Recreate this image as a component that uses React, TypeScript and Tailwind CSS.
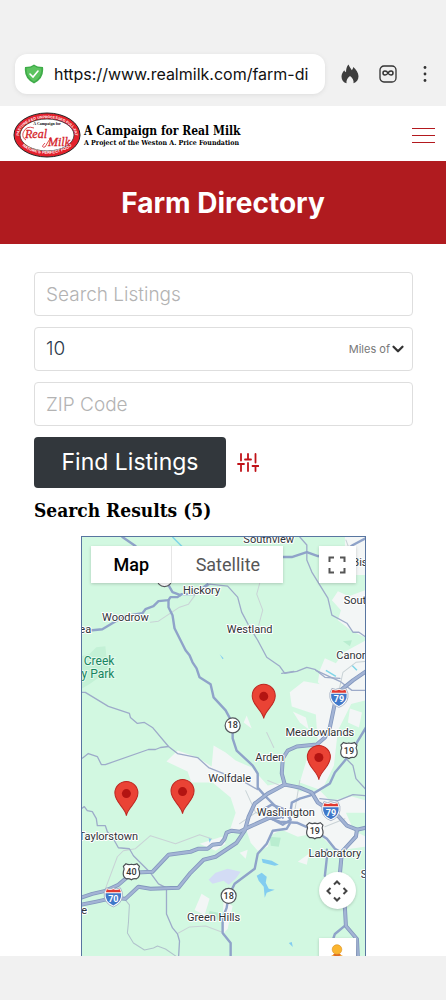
import { useState } from "react";
import type { ReactNode } from "react";
import { ChevronDown } from "lucide-react";

const MAJOR = "#8fa3c9";
const MINOR = "#9dabc9";

const woods = [
  "M81 656 L90 654 L97 647 L106 646 L107 656 L112 662 L104 674 L90 684 L81 689Z",
];

const cleared = [
  "M345 537 H366 V575 L352 575 L345 560Z",
  "M338 591 L349 596 L365 590 V637 L352 631 L338 620 L341 610 L332 600Z",
  "M344 652 L366 640 V700 L349 704 L330 694 L318 682 L320 670 L325 658 L336 663Z",
  "M290 692 L304 681 L332 686 L342 672 L366 673 V690 L352 702 L338 730 L334 765 L322 790 L300 782 L303 772 L309 752 L318 744 L316 714 L292 706Z",
  "M293 711 L306 717 L309 729 L300 722Z",
  "M167 761 L178 750 L198 757 L212 766 L214 745 L226 752 L236 760 L252 767 L268 785 L285 782 L300 791 L320 790 L330 800 L352 796 L366 800 V812 L346 812 L354 830 L366 836 V846 L336 850 L318 832 L298 836 L282 829 L272 834 L268 846 L258 850 L251 842 L247 830 L229 833 L236 812 L231 797 L213 782 L192 782 L188 771Z",
  "M350 708 L362 712 L359 727 L348 722Z",
  "M200 843 L222 836 L226 843 L216 850Z",
  "M240 852 L248 849 L246 858Z",
  "M298 861 L309 853 L307 864Z",
  "M202 893 L210 898 L205 914 L195 909Z",
  "M224 900 L233 905 L228 928 L222 934Z",
  "M247 715 L252 728 L244 722Z",
];

const lanes = [
  "M151 622 L159 621 L180 607 L189 604 L199 590",
  "M260 583 L257 594 L263 610 L259 625",
  "M106 888 L118 856 L124 850 L136 848 L151 835 L176 843 L200 834 L212 838",
  "M179 932 L190 926 L206 925 L222 931",
  "M337 700 L343 672 L356 662 L366 661",
  "M267 732 L274 747 M300 780 L295 810 M268 780 L283 786",
  "M346 540 L352 556 L366 562",
  "M325 826 L345 818 M246 790 L256 812 L240 823",
];

const minorRoads = [
  "M82 692 L86 692 L109 706 L130 713 L131 717 L138 723 L145 722 L153 727 L169 746 L178 753 L198 757 L209 767 L224 773 L244 781 L258 789",
  "M82 758 L84 757 L89 753 L98 756 L102 764 L106 764 L149 749 L156 749 L161 747 L169 746",
  "M82 808 L85 806 L88 810 L93 811 L97 818 L98 825 L106 825 L108 831 L114 838 L119 847 L130 848 L134 855 L151 872 L159 883 L167 887 L167 913 L173 927 L178 933 L180 940 L179 957",
  "M300 537 L307 545 L307 560 L312 572 L320 585 L328 598 L332 615 L347 623 L353 632 L359 632 L366 637",
  "M202 590 L210 584 L228 586 L238 597 L242 612 L250 627 L258 640 L267 657 L280 666 L285 673 L297 671 L307 667 L315 669 L325 677 L340 678",
  "M282 673 L294 671 M316 670 L340 681 L352 690 L366 690",
  "M346 758 L353 765 L356 778 L366 789",
  "M320 798 L338 800 L353 794 L366 795",
];

const tracks = [
  "M126 899 L130 904 L129 922 L128 932 L134 942 L145 949 L154 947 L158 945 L166 948 L179 957",
];

const roads = [
  "M123 537 L136 546 L162 572 L169 585 L173 592 L181 595",
  "M81 628 L93 630 L103 629 L113 623 L125 616 L143 613 L146 609 L154 606 L159 601 L169 600 L171 597 L178 597 L182 594 L195 594 L208 584",
  "M169 600 L169 607 L173 615 L175 628 L186 650 L190 655 L193 662 L197 668 L200 677 L211 684 L214 697 L226 710 L233 723 L233 738 L237 750 L253 765 L258 773 L258 787 L265 795 L277 807 L283 817",
  "M281 557 L292 557 L307 552 L318 556 L335 558 L353 545 L366 538",
  "M366 727 L357 742 L345 760 L335 772 L330 783 L310 795 L300 798 L292 802 L290 817",
  "M290 823 L287 828 L273 830 L267 843 L258 853 L255 868 L235 883 L229 895 L227 907 L223 917 L223 932 L231 942 L231 957",
  "M268 817 L280 821 L297 822 L315 830 L327 838 L335 848 L342 852 L357 833",
  "M327 849 L327 857 L325 875 M346 924 L335 933 L332 942",
  "M258 812 L272 804 L283 808 L291 819 L283 824 L270 817",
];

const highways = [
  "M81 897 L93 893 L106 890 L119 884 L133 872 L153 871 L169 854 L191 851 L199 848 L208 848 L213 844 L221 843 L225 838 L227 832 L232 830 L240 831 L248 827 L270 817 L280 816",
  "M81 904 L96 901 L114 897 L126 898 L139 886 L151 888 L179 887 L191 872 L204 859 L216 856 L237 842 L245 830 L249 816 L255 803 L268 793 L285 784 L300 787 L312 792 L318 802 L338 815 L347 825 L357 829 L366 827",
  "M285 784 L282 773 L283 758 L288 750 L297 746 L317 744 L325 737 L330 727 L335 703 L337 693 L353 680 L366 671",
  "M357 829 L356 836 L342 851 L340 873 L345 907 L346 925 L357 938 L358 957",
];

const places = [
  { name: "Southview", x: 269, y: 543 },
  { name: "Hickory", x: 202, y: 594 },
  { name: "Woodrow", x: 126, y: 621 },
  { name: "Westland", x: 250, y: 633 },
  { name: "Bis", x: 360, y: 566 },
  { name: "Sout", x: 355, y: 604 },
  { name: "Canor", x: 351, y: 659 },
  { name: "Meadowlands", x: 320, y: 736 },
  { name: "Arden", x: 270, y: 760 },
  { name: "Wolfdale", x: 230, y: 781 },
  { name: "Washington", x: 286, y: 815 },
  { name: "Taylorstown", x: 109, y: 839 },
  { name: "Laboratory", x: 335, y: 856 },
  { name: "Green Hills", x: 214, y: 920 },
  { name: "ea", x: 86, y: 633 },
  { name: "e", x: 85, y: 913 },
  { name: "S", x: 364, y: 877 },
];

const pins = [
  { x: 264, y: 718 },
  { x: 319, y: 779 },
  { x: 127, y: 815 },
  { x: 183, y: 813 },
];

function Interstate({ x, y, label }: { x: number; y: number; label: string }) {
  return (
    <g transform={`translate(${x} ${y})`}>
      <path d="M-7 -9 Q-3 -7 0 -9 Q3 -7 7 -9 Q10 -4 9 0 Q8 7 0 10 Q-8 7 -9 0 Q-10 -4 -7 -9Z" fill="#fff" stroke="#9aa7bd" strokeWidth="0.8" />
      <path d="M-6.500 -7.500 Q-3 -6 0 -7.500 Q3 -6 6.500 -7.500 L7.500 -4.500 H-7.500Z" fill="#e0382f" />
      <path d="M-7.800 -3.500 H7.800 Q8.500 5 0 8.500 Q-8.500 5 -7.800 -3.500Z" fill="#3f78c9" />
      <text y="5" textAnchor="middle" fontSize="9" fontWeight="700" fill="#fff">{label}</text>
    </g>
  );
}

function UsRoute({ x, y, label }: { x: number; y: number; label: string }) {
  return (
    <g transform={`translate(${x} ${y})`}>
      <path d="M-5.500 -8 Q-3 -6.500 0 -7.500 Q3 -6.500 5.500 -8 L8 -5.500 Q6.500 -3 8 0 Q9 5 5 7 Q2 6.500 0 8 Q-2 6.500 -5 7 Q-9 5 -8 0 Q-6.500 -3 -8 -5.500Z" fill="#fff" stroke="#4b4f54" strokeWidth="1.200" />
      <text y="3" textAnchor="middle" fontSize="9" fontWeight="500" fill="#333">{label}</text>
    </g>
  );
}

function StateRoute({ x, y, label }: { x: number; y: number; label: string }) {
  return (
    <g transform={`translate(${x} ${y})`}>
      <circle r="7.500" fill="#fff" stroke="#55595e" strokeWidth="1.200" />
      <text y="3" textAnchor="middle" fontSize="9" fontWeight="500" fill="#333">{label}</text>
    </g>
  );
}

function RoadGroup({ paths, color, width }: { paths: string[]; color: string; width: number }) {
  return (
    <g fill="none" stroke={color} strokeWidth={width} strokeLinejoin="round" strokeLinecap="round">
      {paths.map((d) => (
        <path key={d} d={d} />
      ))}
    </g>
  );
}

function MapCanvas() {
  return (
    <svg
      viewBox="82 537 283 418"
      preserveAspectRatio="xMidYMin slice"
      className="block h-full w-full font-['Roboto',sans-serif]"
      role="img"
      aria-label="Map of farm listings"
    >
      <rect x="0" y="500" width="450" height="500" fill="#d2f8e1" />
      <g fill="#c3f1d6">
        {woods.map((d) => (
          <path key={d} d={d} />
        ))}
      </g>
      <g fill="#f3f6f6">
        {cleared.map((d) => (
          <path key={d} d={d} />
        ))}
      </g>
      <g fill="#b9edd0">
        <path d="M270 836 L281 837 L279 846 L271 845Z M343 641 L352 640 L350 646Z M210 910 L220 912 L220 919 L208 917Z" />
      </g>
      <path d="M209 879 L216 872 L228 868 L241 871 L236 878 L229 884 L224 880 L213 883Z" fill="#d3dcf5" />
      <g fill="#82cdf0">
        <path d="M262 858 L272 860 L279 864 L275 865 L263 862Z" />
        <path d="M257 875 L262 872 L267 876 L266 882 L269 888 L275 889 L267 892 L265 897 L264 886 L259 880Z" />
        <path d="M289 942 L292 941 L293 946Z M209 837 L212 838 L210 842Z M220 654 L224 658 L223 659Z" />
      </g>
      <path d="M173 537 L185 549 M326 670 L336 676 M352 665 L357 670" stroke="#7fd5e8" strokeWidth="1.500" />

      <RoadGroup paths={lanes} color="#c9d3d6" width={1} />
      <RoadGroup paths={tracks} color="#b1c3cc" width={1} />
      <RoadGroup paths={minorRoads} color={MINOR} width={1.3} />
      <RoadGroup paths={roads} color={MAJOR} width={2.4} />
      <RoadGroup paths={highways} color="#8297bd" width={4} />
      <RoadGroup paths={highways} color="#a3b4d5" width={2.4} />

      <StateRoute x={165} y={579} label="18" />
      <StateRoute x={233} y={725} label="18" />
      <StateRoute x={229} y={895} label="18" />
      <UsRoute x={349} y={750} label="19" />
      <UsRoute x={315} y={830} label="19" />
      <UsRoute x={132} y={871} label="40" />
      <Interstate x={339} y={697} label="79" />
      <Interstate x={331} y={810} label="79" />
      <Interstate x={114} y={896} label="70" />

      <g fontSize="11" fill="#2f3337" stroke="#fff" strokeWidth="2" strokeLinejoin="round" paintOrder="stroke" textAnchor="middle">
        {places.map((p) => (
          <text key={p.name} x={p.x} y={p.y}>{p.name}</text>
        ))}
      </g>
      <g fontSize="12" fill="#188560" stroke="#e2f9ec" strokeWidth="2" paintOrder="stroke" textAnchor="end">
        <text x="115" y="665">Creek</text>
        <text x="115" y="678">y Park</text>
      </g>

      {pins.map((p) => (
        <g key={`${p.x}-${p.y}`} transform={`translate(${p.x} ${p.y})`}>
          <path d="M0 0 C-1 -8 -11.500 -13 -11.500 -22.500 A11.500 11.500 0 0 1 11.500 -22.500 C11.500 -13 1 -8 0 0Z" fill="#ea4335" stroke="#bd2520" />
          <circle cy="-22" r="4.500" fill="#b31412" />
        </g>
      ))}
    </svg>
  );
}

function SealLogo() {
  return (
    <svg viewBox="0 0 68 46" className="h-[46px] w-[68px] shrink-0" role="img" aria-label="Real Milk">
      <defs>
        <path id="seal-top" d="M7.500 29 A28 17.300 0 1 1 60.500 29" />
        <path id="seal-bottom" d="M4.500 28 A31 19.800 0 0 0 63.500 28" />
      </defs>
      <ellipse cx="34" cy="23" rx="33" ry="22" fill="#e3202b" stroke="#222" />
      <ellipse cx="34" cy="23" rx="27" ry="16" fill="#fff" stroke="#333" strokeWidth="0.8" />
      <g fontFamily="Liberation Serif, serif" fontWeight="700" textAnchor="middle">
        <g fill="#fff" fontFamily="Liberation Sans, sans-serif">
          <text fontSize="3.600"><textPath href="#seal-top" startOffset="50%">PASTURE-FED UNPROCESSED FULL-FAT</textPath></text>
          <text fontSize="4"><textPath href="#seal-bottom" startOffset="50%">NATURE'S PERFECT FOOD</textPath></text>
        </g>
        <text x="34" y="13" fontSize="4" fill="#111">A Campaign for</text>
        <g fill="#d51f2b" fontStyle="italic" fontSize="12" fontWeight="400" stroke="#d51f2b" strokeWidth="0.300">
          <text x="23" y="26">Real</text>
          <text x="46" y="34">Milk</text>
        </g>
        <path d="M13 28 Q9 26 10 21 Q13 13 21 16 M32 31 Q27 36 32 35 L38 25" fill="none" stroke="#d51f2b" strokeWidth="0.800" />
      </g>
    </svg>
  );
}

function BrowserBar() {
  return (
    <div className="flex items-center bg-[#f1f1f1] pt-[54px] pr-[17px] pb-3 pl-[15px] shadow-[0_1px_1px_#dddddd]">
      <div className="flex h-10 min-w-0 flex-1 items-center gap-[10px] rounded-xl bg-white px-[9px] shadow-[0_1px_4px_#dddddd]">
        <svg viewBox="0 0 20 20" className="h-5 w-5 shrink-0" aria-hidden="true">
          <path d="M10 .5 Q13 3 19 3 Q20.500 14.500 10 19.500 Q-.5 14.500 1 3 Q7 3 10 .5Z" fill="#3fac49" />
          <path d="M10 2 Q13 4.500 17.500 4.300 Q18 13 10 17.800 Q2 13 2.500 4.300 Q7 4.500 10 2Z" fill="#5cc35f" />
          <path d="M6 10 L9 13 L14 7" fill="none" stroke="#fff" strokeWidth="1.600" strokeLinecap="round" />
        </svg>
        <input
          aria-label="Address"
          defaultValue="https://www.realmilk.com/farm-di"
          className="min-w-0 flex-1 bg-transparent font-['Inter',sans-serif] text-base text-[#111] outline-none"
        />
      </div>
      <button aria-label="Clear data" className="ml-4">
        <svg viewBox="0 0 18 20" className="h-5 w-[18px]" fill="#3d3d3d" aria-hidden="true">
          <path d="M7.500 .5 C8.500 3 10 4.500 10.800 6.200 C11.500 5.500 12 4.500 12.300 3 C15 5.500 17.500 9 17.500 12.300 C17.500 16 15.500 18.500 12.500 19.300 C13 16.500 11.500 14 9 12 C6.500 14 5 16.500 5.500 19.300 C2.500 18.500 .5 16 .5 12.500 C.5 10 2 7.800 3.300 6.300 C3.700 7.300 4.200 7.800 5 8.200 C5 5 5.700 2.500 7.500 .5Z" />
        </svg>
      </button>
      <button aria-label="Tabs" className="ml-5">
        <svg viewBox="0 0 18 18" className="h-[18px] w-[18px]" fill="none" stroke="#333" strokeWidth="1.300" aria-hidden="true">
          <rect x="1" y="1" width="16" height="16" rx="4" />
          <path d="M9 8 C7.500 5.300 4 5.500 4 8 C4 10.500 7.500 10.700 9 8 C10.500 5.300 14 5.500 14 8 C14 10.500 10.500 10.700 9 8Z" strokeWidth="1.500" />
        </svg>
      </button>
      <button aria-label="Menu" className="ml-6">
        <svg viewBox="0 0 8 18" className="h-[18px] w-2" fill="#333" aria-hidden="true">
          <circle cx="4" cy="2.500" r="1.400" />
          <circle cx="4" cy="9" r="1.400" />
          <circle cx="4" cy="15.500" r="1.400" />
        </svg>
      </button>
    </div>
  );
}

function SiteHeader() {
  return (
    <header className="flex h-[55px] items-center bg-white pt-[3px] pr-[11px] pl-[13px]">
      <a href="#" className="flex items-center gap-[3px]">
        <SealLogo />
        <span className="pt-[2px] font-['DejaVu_Serif_Condensed','DejaVu_Serif',serif] font-bold whitespace-nowrap text-black">
          <span className="block text-xs leading-[13px]">A Campaign for Real Milk</span>
          <span className="block text-[7px] leading-[10px]">A Project of the Weston A. Price Foundation</span>
        </span>
      </a>
      <button aria-label="Open menu" className="ml-auto flex w-[23px] flex-col gap-[6px]">
        <span className="h-px w-full bg-[#b3191e]" />
        <span className="h-px w-full bg-[#b3191e]" />
        <span className="h-px w-full bg-[#b3191e]" />
      </button>
    </header>
  );
}

const field =
  "h-11 w-full rounded border border-[#dedede] bg-white px-[11px] text-[19px] font-light text-[#2c3a4b] outline-none placeholder:text-[#b3b3b3]";

function SearchForm() {
  const [radius, setRadius] = useState("10");

  return (
    <form className="flex flex-col gap-[11px]" onSubmit={(e) => e.preventDefault()}>
      <input aria-label="Search Listings" placeholder="Search Listings" className={field} />
      <div className="relative">
        <select
          id="radius"
          value={radius}
          onChange={(e) => setRadius(e.target.value)}
          className={`${field} appearance-none`}
        >
          <option>10</option>
          <option>25</option>
          <option>50</option>
        </select>
        <label htmlFor="radius" className="pointer-events-none absolute inset-y-0 right-[6px] flex items-center text-[11px] text-[#777]">
          Miles of
          <ChevronDown className="-ml-px h-[18px] w-[18px] text-[#333]" strokeWidth={3} />
        </label>
      </div>
      <input aria-label="ZIP Code" placeholder="ZIP Code" className={field} />
      <div className="flex items-center gap-[11px]">
        <button className="h-[51px] w-48 rounded bg-[#32373c] text-[23px] text-white">Find Listings</button>
        <button type="button" aria-label="More filters">
          <svg viewBox="0 0 22 19" className="h-[19px] w-[22px]" fill="none" stroke="#c01218" strokeWidth="1.800" strokeLinecap="round" aria-hidden="true">
            <path d="M4 1 V7.500 M1 11 H7 M4 11 V18 M11 1 V6.500 M8 6.500 H14 M11 10 V18 M18.500 1 V9.500 M15.500 13 H21.300 M18.500 13 V18" />
          </svg>
        </button>
      </div>
    </form>
  );
}

function MapControl({ label, className, children }: { label: string; className: string; children: ReactNode }) {
  return (
    <button aria-label={label} className={`absolute flex h-[37px] w-[37px] items-center justify-center bg-white shadow-[0_1px_3px_#00000030] ${className}`}>
      {children}
    </button>
  );
}

function FarmMap() {
  return (
    <div className="relative mx-auto h-[420px] w-3/4 overflow-hidden border border-b-0 border-[#5875a0]">
      <MapCanvas />
      <div className="absolute top-[9px] left-[9px] flex h-[37px] bg-white font-['Roboto',sans-serif] text-lg shadow-[0_1px_3px_#00000030]">
        <button className="w-20 font-medium text-black">Map</button>
        <button className="w-28 border-l border-[#e6e6e6] text-[#565656]">Satellite</button>
      </div>
      <MapControl label="Toggle fullscreen view" className="top-[9px] right-[9px]">
        <svg viewBox="0 0 18 18" className="h-[18px] w-[18px]" fill="none" stroke="#555" strokeWidth="2" aria-hidden="true">
          <path d="M1.500 6 V1.500 H6 M12 1.500 H16.500 V6 M16.500 12 V16.500 H12 M6 16.500 H1.500 V12" />
        </svg>
      </MapControl>
      <MapControl label="Map camera controls" className="right-[9px] bottom-[47px] rounded-full">
        <svg viewBox="0 0 22 22" className="h-[22px] w-[22px]" fill="none" stroke="#444" strokeWidth="2" aria-hidden="true">
          <path d="M8 4.500 L11 1.500 L14 4.500 M17.500 8 L20.500 11 L17.500 14 M14 17.500 L11 20.500 L8 17.500 M4.500 14 L1.500 11 L4.500 8" />
        </svg>
      </MapControl>
      <MapControl label="Street View" className="right-[9px] -bottom-[19px]">
        <svg viewBox="0 0 14 26" className="h-[26px] w-[14px]" aria-hidden="true">
          <path d="M1 12 Q7 8 13 12 V18 H11 L10 25 H4 L3 18 H1Z" fill="#f0a02e" />
          <path d="M3 10 H11 L7 15Z" fill="#e06a25" />
          <circle cx="7" cy="5.500" r="4.800" fill="#fbb52f" stroke="#d98e20" strokeWidth="0.600" />
        </svg>
      </MapControl>
    </div>
  );
}

export default function App() {
  return (
    <div className="flex min-h-screen flex-col bg-white font-['Inter',sans-serif]">
      <BrowserBar />
      <SiteHeader />
      <div className="flex h-[83px] items-center justify-center bg-[#b01b1f]">
        <h1 className="text-[28px] font-bold text-white">Farm Directory</h1>
      </div>
      <main className="flex-1 pt-7 pr-[33px] pl-[34px]">
        <SearchForm />
        <h2 className="mt-[6px] mb-[10px] font-['DejaVu_Serif_Condensed','DejaVu_Serif',serif] text-[19px] leading-8 font-bold text-black">
          Search Results (5)
        </h2>
        <FarmMap />
      </main>
      <div className="h-11 bg-[#f1f1f1]" />
    </div>
  );
}
